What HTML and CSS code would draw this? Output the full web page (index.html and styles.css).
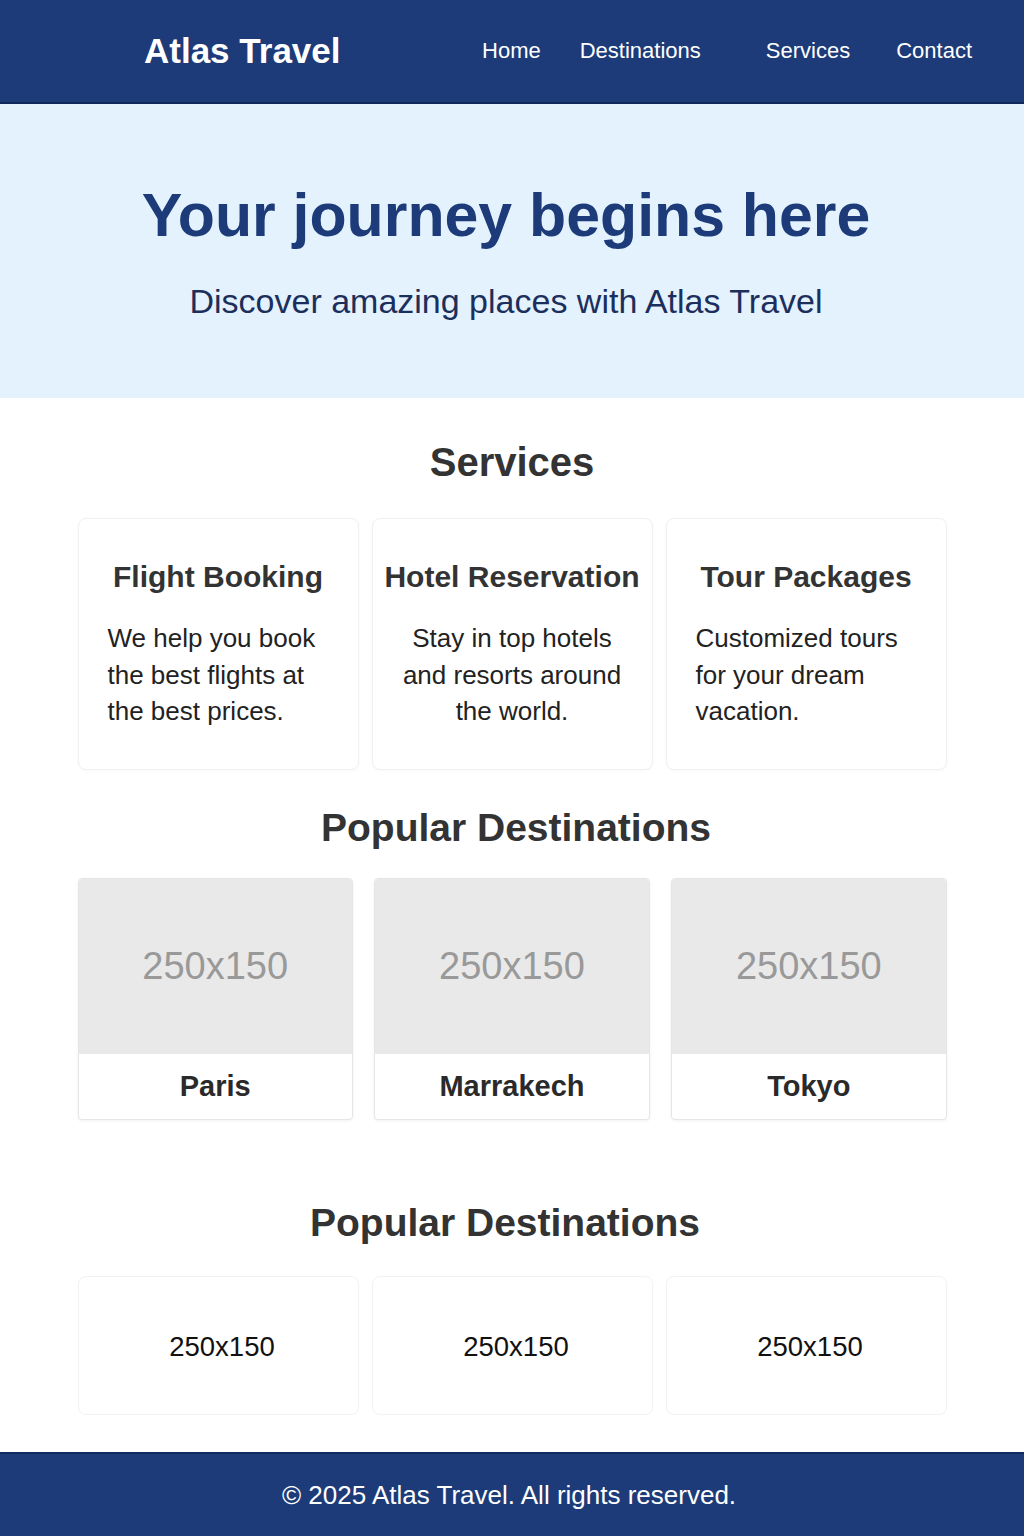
FILE: index.html
```html
<!DOCTYPE html>
<html lang="en">
<head>
<meta charset="utf-8">
<title>Atlas Travel</title>
<link rel="stylesheet" href="styles.css">
</head>
<body>
<header class="site-header">
  <div class="logo">Atlas Travel</div>
  <nav class="nav">
    <a href="#">Home</a>
    <a href="#">Destinations</a>
    <a href="#">Services</a>
    <a href="#">Contact</a>
  </nav>
</header>

<section class="hero">
  <h1 class="hero-title">Your journey begins here</h1>
  <p class="hero-sub">Discover amazing places with Atlas Travel</p>
</section>

<main class="container">
  <h2 class="section-title services-title">Services</h2>
  <div class="service-grid">
    <div class="service-card">
      <h3>Flight Booking</h3>
      <p class="left">We help you book the best flights at the best prices.</p>
    </div>
    <div class="service-card">
      <h3>Hotel Reservation</h3>
      <p class="center">Stay in top hotels and resorts around the world.</p>
    </div>
    <div class="service-card">
      <h3>Tour Packages</h3>
      <p class="left">Customized tours for your dream vacation.</p>
    </div>
  </div>

  <h2 class="section-title dest-title">Popular Destinations</h2>
  <div class="dest-grid">
    <div class="dest-card">
      <div class="dest-img">250x150</div>
      <div class="dest-name">Paris</div>
    </div>
    <div class="dest-card">
      <div class="dest-img">250x150</div>
      <div class="dest-name">Marrakech</div>
    </div>
    <div class="dest-card">
      <div class="dest-img">250x150</div>
      <div class="dest-name">Tokyo</div>
    </div>
  </div>

  <h2 class="section-title dest-title-2">Popular Destinations</h2>
  <div class="plain-grid">
    <div class="plain-card">250x150</div>
    <div class="plain-card">250x150</div>
    <div class="plain-card">250x150</div>
  </div>
</main>

<footer class="site-footer">© 2025 Atlas Travel. All rights reserved.</footer>
</body>
</html>
```

FILE: styles.css
```css
* { box-sizing: border-box; }

body {
  margin: 0;
  font-family: "Liberation Sans", Arial, Helvetica, sans-serif;
  color: #222;
  background: #fff;
}

.site-header {
  height: 104px;
  background: #1c3b78;
  border-bottom: 2px solid #10295c;
  display: flex;
  align-items: center;
  padding: 0 52px 0 144px;
}

.logo {
  color: #fff;
  font-size: 35px;
  font-weight: bold;
}

.nav {
  margin-left: auto;
  display: flex;
  align-items: center;
}

.nav a {
  color: #fff;
  text-decoration: none;
  font-size: 22px;
}

.nav a:nth-child(2) { margin-left: 39px; }
.nav a:nth-child(3) { margin-left: 65px; }
.nav a:nth-child(4) { margin-left: 46px; }

.hero {
  background: #e4f2fe;
  height: 294px;
  padding: 76px 12px 0 0;
  text-align: center;
}

.hero-title {
  margin: 0;
  font-size: 60.8px;
  line-height: 70px;
  font-weight: bold;
  color: #1c3b78;
}

.hero-sub {
  margin: 31px 0 0;
  font-size: 34px;
  line-height: 40px;
  color: #1c2f5c;
}

.container {
  width: 869px;
  margin: 0 auto;
}

.section-title {
  margin: 0;
  font-size: 40px;
  line-height: 46px;
  font-weight: bold;
  color: #333;
  text-align: center;
}

.services-title { margin-top: 41px; margin-bottom: 33px; }
.dest-title { margin-top: 35px; margin-bottom: 27px; padding-left: 8px; font-size: 39px; }
.dest-title-2 { margin-top: 80px; margin-bottom: 30px; padding-right: 14px; font-size: 39px; }

.service-grid {
  display: grid;
  grid-template-columns: repeat(3, minmax(0, 1fr));
  gap: 13px;
}

.service-card {
  background: #fff;
  border: 1px solid #f0f0f0;
  border-radius: 8px;
  padding: 40px 29px 39px;
  box-shadow: 0 1px 3px rgba(0,0,0,0.03);
}

.service-card h3 {
  margin: 0 -29px 26px;
  font-size: 30px;
  line-height: 35px;
  font-weight: bold;
  color: #333;
  text-align: center;
  white-space: nowrap;
}

.service-card p {
  margin: 0;
  font-size: 26px;
  line-height: 36.5px;
  color: #222;
}

.service-card p.left { text-align: left; }
.service-card p.center { text-align: center; }

.dest-grid {
  display: grid;
  grid-template-columns: repeat(3, minmax(0, 1fr));
  gap: 21.5px;
}

.dest-card {
  border: 1px solid #e6e6e6;
  border-radius: 4px;
  overflow: hidden;
  background: #fff;
  box-shadow: 0 1px 3px rgba(0,0,0,0.06);
}

.dest-img {
  height: 175px;
  background: #e9e9e9;
  display: flex;
  align-items: center;
  justify-content: center;
  font-size: 38px;
  color: #999;
}

.dest-name {
  height: 65px;
  display: flex;
  align-items: center;
  justify-content: center;
  font-size: 29px;
  font-weight: bold;
  color: #2a2a2a;
}

.plain-grid {
  display: grid;
  grid-template-columns: repeat(3, minmax(0, 1fr));
  gap: 13px;
  margin-bottom: 37px;
}

.plain-card {
  height: 139px;
  border: 1px solid #f2f2f2;
  border-radius: 8px;
  background: #fff;
  display: flex;
  align-items: center;
  justify-content: center;
  font-size: 27.5px;
  color: #111;
  padding: 3px 0 0 8px;
}

.site-footer {
  height: 86px;
  background: #1c3b78;
  border-top: 2px solid #0f2a5e;
  color: #fff;
  display: flex;
  align-items: center;
  justify-content: center;
  font-size: 26px;
  padding-right: 6px;
}
```
